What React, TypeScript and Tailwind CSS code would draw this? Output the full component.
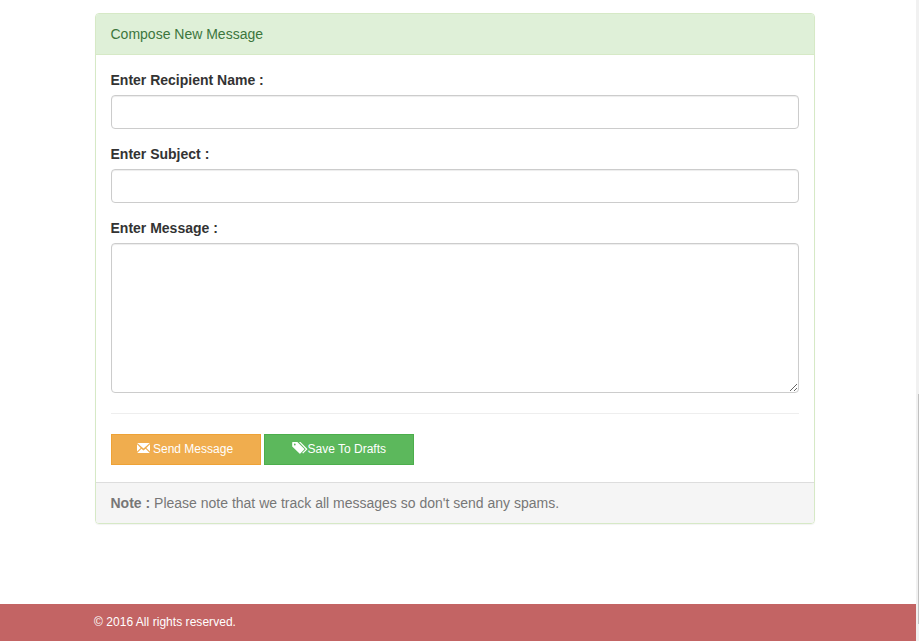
import type { ReactNode } from "react";

function EnvelopeIcon() {
  return (
    <svg className="block h-3 w-[13px]" viewBox="0 0 13 12" fill="white" aria-hidden="true">
      <path d="M0.2 1H12.8L6.5 6.6z" />
      <path d="M0 2.2L3.7 5.9L0 9.6z" />
      <path d="M13 2.2L9.3 5.9L13 9.6z" />
      <path d="M4.4 6.7L6.5 8.5L8.6 6.7L12.8 11H0.2z" />
    </svg>
  );
}

function TagsIcon() {
  return (
    <svg className="block h-3 w-4" viewBox="0 0 16 12" fill="white" aria-hidden="true">
      <path
        fillRule="evenodd"
        d="M0.8 0H5.4L12.2 6.8Q12.6 7.2 12.2 7.6L8.3 11.5Q7.9 11.9 7.5 11.5L0.2 4.4V0.6Q0.2 0 0.8 0zM2.8 1.6A0.9 0.9 0 1 0 2.8 3.4A0.9 0.9 0 1 0 2.8 1.6z"
      />
      <path d="M7 0H8.5L15.2 6.7Q15.6 7.1 15.2 7.5L11.1 11.6L10.2 10.8L13.8 7.2z" />
    </svg>
  );
}

const fieldClass =
  "block w-full rounded border border-[#ccc] bg-white px-3 py-1.5 shadow-[inset_0_1px_1px_rgba(0,0,0,0.075)] outline-none";

function Field({ id, label, children }: { id: string; label: string; children: ReactNode }) {
  return (
    <div>
      <label htmlFor={id} className="-ml-[0.5px] mb-[5px] block font-bold">
        {label}
      </label>
      {children}
    </div>
  );
}

export default function App() {
  return (
    <div className="flex h-[641px] w-[919px] overflow-hidden bg-white font-['Liberation_Sans',Arial,sans-serif] text-sm leading-5 text-[#333]">
      <div className="flex w-[916px] flex-col justify-between pt-[13px]">
        <section className="ml-[95px] w-[720px] rounded border border-[#d6e9c6] shadow-[0_1px_1px_rgba(0,0,0,0.05)]">
          <header className="rounded-t-[3px] border-b border-[#d6e9c6] bg-[#dff0d8] px-[14.5px] py-[10px] text-[#3c763d]">
            Compose New Message
          </header>
          <form className="px-[15px] pt-[15px] pb-[17px]" onSubmit={(e) => e.preventDefault()}>
            <div className="flex flex-col gap-[15px]">
              <Field id="recipient" label="Enter Recipient Name :">
                <input id="recipient" type="text" className={`${fieldClass} h-[34px]`} />
              </Field>
              <Field id="subject" label="Enter Subject :">
                <input id="subject" type="text" className={`${fieldClass} h-[34px]`} />
              </Field>
              <Field id="message" label="Enter Message :">
                <textarea id="message" className={`${fieldClass} h-[150px] resize`} />
              </Field>
            </div>
            <hr className="my-5 border-t border-[#eee]" />
            <div className="flex gap-[3px] text-xs leading-[18px] text-white">
              <button className="flex h-[31px] w-[150px] border border-[#eea236] bg-[#f0ad4e] pt-[5px] pl-[25px]">
                <span className="mt-[2px] mr-[3px]">
                  <EnvelopeIcon />
                </span>
                Send Message
              </button>
              <button className="flex h-[31px] w-[150px] border border-[#4cae4c] bg-[#5cb85c] pt-[5px] pl-[27px]">
                <span className="mt-[2px] -mr-[0.5px]">
                  <TagsIcon />
                </span>
                Save To Drafts
              </button>
            </div>
          </form>
          <footer className="rounded-b-[3px] border-t border-[#ddd] bg-[#f5f5f5] px-[14.5px] py-[10px] text-[#777]">
            <strong className="font-bold">Note :</strong> Please note that we track all messages so don't send any spams.
          </footer>
        </section>
        <footer className="h-[37px] bg-[#c36464] pt-[9px] pl-[94px] text-xs leading-[18px] tracking-[0.04px] text-white">
          © 2016 All rights reserved.
        </footer>
      </div>
      <div className="flex w-[3px] justify-end bg-[#f1f1f1] pt-[394px]">
        <div className="h-[230px] w-px bg-[#c1c1c1]" />
      </div>
    </div>
  );
}
